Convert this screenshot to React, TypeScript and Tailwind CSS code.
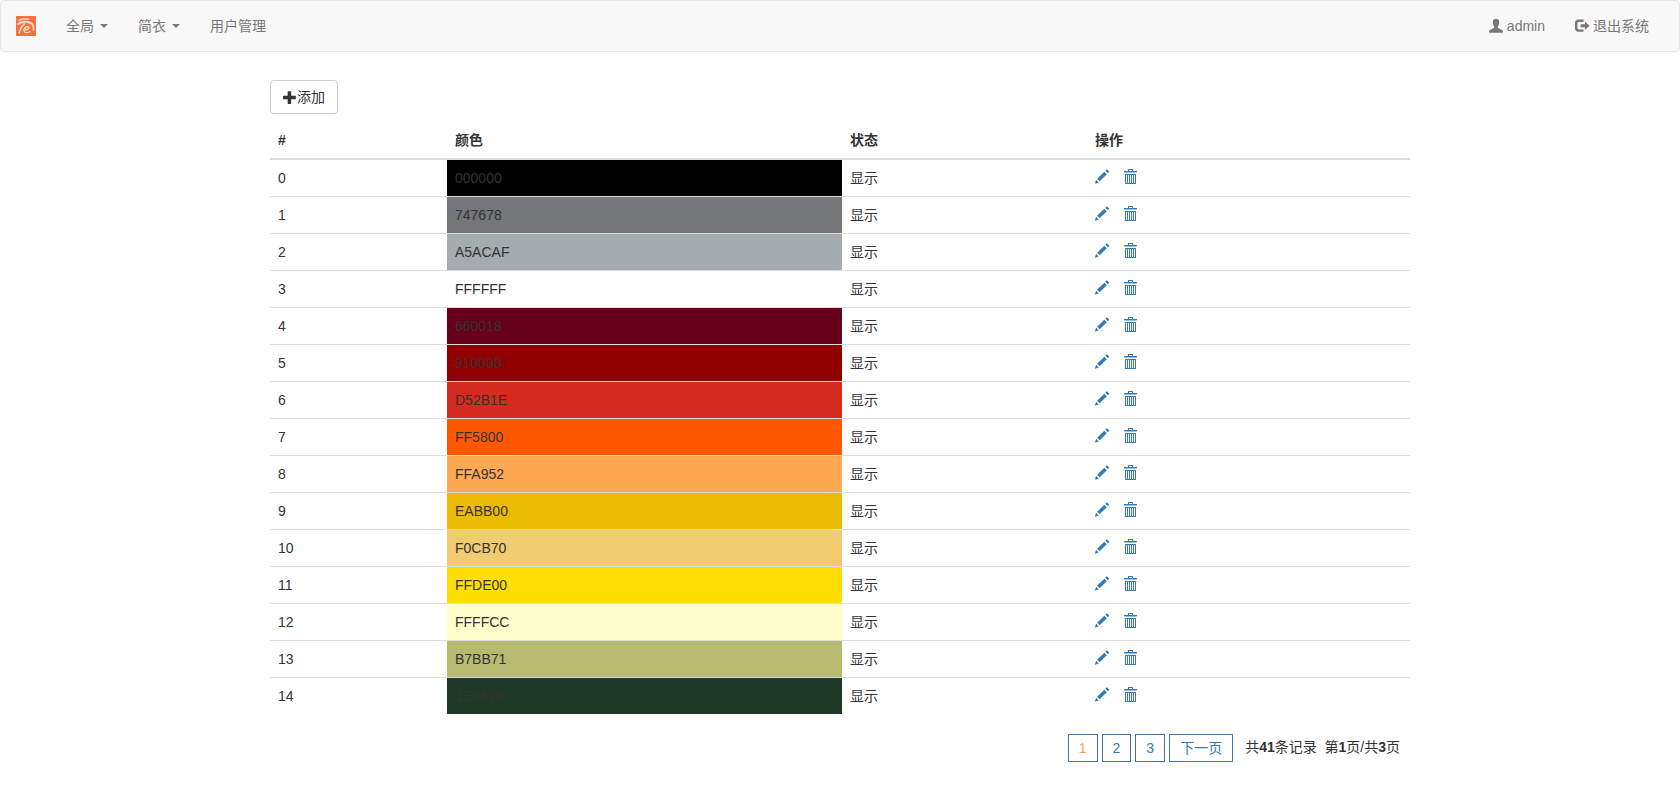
import React from "react";

const rows = [
  { code: "000000", bg: "bg-[#000000]" },
  { code: "747678", bg: "bg-[#747678]" },
  { code: "A5ACAF", bg: "bg-[#A5ACAF]" },
  { code: "FFFFFF", bg: "bg-[#FFFFFF]" },
  { code: "660018", bg: "bg-[#660018]" },
  { code: "910000", bg: "bg-[#910000]" },
  { code: "D52B1E", bg: "bg-[#D52B1E]" },
  { code: "FF5800", bg: "bg-[#FF5800]" },
  { code: "FFA952", bg: "bg-[#FFA952]" },
  { code: "EABB00", bg: "bg-[#EABB00]" },
  { code: "F0CB70", bg: "bg-[#F0CB70]" },
  { code: "FFDE00", bg: "bg-[#FFDE00]" },
  { code: "FFFFCC", bg: "bg-[#FFFFCC]" },
  { code: "B7BB71", bg: "bg-[#B7BB71]" },
  { code: "1E3828", bg: "bg-[#1E3828]" },
];

/* 14px glyph drawn on a 1200-unit, y-up grid. */
function Glyph({ d }: { d: string }) {
  return (
    <svg viewBox="0 0 1200 1200" className="inline-block size-3.5 shrink-0 overflow-visible" fill="currentColor" aria-hidden="true">
      <path transform="matrix(1 0 0 -1 0 1200)" fillRule="evenodd" d={d} />
    </svg>
  );
}

const PLUS =
  "M450 1100h200q21 0 35.500 -14.500t14.500 -35.500v-350h350q21 0 35.500 -14.500t14.500 -35.500v-200q0 -21 -14.500 -35.500t-35.500 -14.500h-350v-350q0 -21 -14.500 -35.500t-35.500 -14.500h-200q-21 0 -35.500 14.500t-14.500 35.500v350h-350q-21 0 -35.500 14.500t-14.500 35.500v200q0 21 14.500 35.500t35.500 14.500h350v350q0 21 14.500 35.500t35.500 14.500z";
const PENCIL =
  "M1011 1250q19 0 33 -13l153 -153q13 -14 13 -33t-13 -33l-99 -92l-214 214l95 96q13 14 32 14zM1013 840l-615 -614l-214 214l614 614zM317 136l-333 -112l110 335z";
const USER =
  "M600 1230q130 0 205 -85t75 -215q0 -100 -30 -190q-30 -85 -90 -140v-120q0 -50 60 -78l260 -120q120 -55 120 -160V30H0v92q0 105 120 160l260 120q60 28 60 78v120q-60 55 -90 140q-30 90 -30 190q0 130 75 215t205 85z";
const LOGOUT =
  "M300 1150h430v-200H320q-110 0 -110 -110v-420q0 -110 110 -110h410v-200H300Q0 110 0 400v460q0 290 300 290zM850 980l400 -350l-400 -350v220H480v260h370z";

function Trash() {
  return (
    <svg viewBox="0 0 14 14" className="size-3.5 shrink-0 overflow-visible" fill="currentColor" aria-hidden="true">
      <path d="M5 -1h5v1h-5zM5 0h1v1h-1zM9 0h1v1h-1zM1 1h13v1H1zM1.500 2h12v.5h-12z" />
      <path fillRule="evenodd" d="M2 4h11v10h-11zM3 5v8h1v-8zM5 5v8h1v-8zM7 5v8h1v-8zM9 5v8h1v-8zM11 5v8h1v-8z" />
    </svg>
  );
}

function Logo() {
  return (
    <svg viewBox="0 0 20 20" className="size-5" fill="none" aria-hidden="true">
      <rect width="20" height="20" rx="0.5" fill="#ff7038" />
      <g stroke="#ffe6da" strokeLinecap="round">
        <path d="M3 4.300Q7.500 2.200 12.500 3.300" strokeWidth="1.400" />
        <path d="M2 8Q7 5 12 6Q18 7.300 17.600 13.500" strokeWidth="1.800" />
        <path d="M8.500 8Q4.500 11 3.200 17" strokeWidth="1.500" />
        <path d="M9.500 13.800Q13.600 13 12.900 11.200Q11.600 9.700 9.300 11.500Q7 14 8.600 16Q11.500 17.500 14 15.500" strokeWidth="1.200" />
      </g>
    </svg>
  );
}

function Caret() {
  return <span className="ml-1.5 border-x-4 border-t-4 border-x-transparent border-t-[#777]" />;
}

export default function App() {
  return (
    <div className="min-h-[790px] bg-white font-['Liberation_Sans','Noto_Sans_CJK_SC',sans-serif] text-sm leading-5 text-[#333]">
      <nav className="flex h-[52px] items-center justify-between rounded-[4px] border border-[#e7e7e7] bg-[#f8f8f8] px-[15px] text-[#777]">
        <div className="flex items-center">
          <a href="#" className="mr-[15px]"><Logo /></a>
          <a href="#" className="flex items-center px-[15px]">全局<Caret /></a>
          <a href="#" className="flex items-center px-[15px]">简衣<Caret /></a>
          <a href="#" className="px-[15px]">用户管理</a>
        </div>
        <div className="flex items-center">
          <a href="#" className="flex items-center gap-1 px-[15px]"><Glyph d={USER} />admin</a>
          <a href="#" className="flex items-center gap-1 px-[15px]"><Glyph d={LOGOUT} />退出系统</a>
        </div>
      </nav>

      <main className="mx-auto w-[1140px] pt-7">
        <button className="flex h-[34px] items-center rounded-[4px] border border-[#ccc] bg-white px-3">
          <Glyph d={PLUS} />添加
        </button>
        <table className="mt-2 w-full table-fixed border-separate border-spacing-0 text-left">
          <colgroup>
            <col className="w-[177px]" />
            <col className="w-[395px]" />
            <col className="w-[245px]" />
            <col className="w-[323px]" />
          </colgroup>
          <thead>
            <tr>
              {["#", "颜色", "状态", "操作"].map((h) => (
                <th key={h} className="h-[38px] border-b-2 border-[#ddd] px-2 py-0 font-bold">{h}</th>
              ))}
            </tr>
          </thead>
          <tbody className="[&>tr:last-child>td]:h-9 [&>tr:last-child>td]:border-b-0">
            {rows.map((row, i) => (
              <tr key={row.code} className="[&>td]:h-[37px] [&>td]:border-b [&>td]:border-[#ddd] [&>td]:px-2 [&>td]:py-0">
                <td>{i}</td>
                <td className={row.bg}>{row.code}</td>
                <td>显示</td>
                <td>
                  <div className="flex items-center gap-3.5 pb-0.5 text-[#337ab7]">
                    <a href="#" className="flex"><Glyph d={PENCIL} /></a>
                    <a href="#" className="flex"><Trash /></a>
                  </div>
                </td>
              </tr>
            ))}
          </tbody>
        </table>

        <div className="mt-5 flex items-center justify-end pr-2.5">
          <div className="flex gap-1 text-[#337ab7] [&>a]:flex [&>a]:h-7 [&>a]:items-center [&>a]:border [&>a]:border-[#44719b] [&>a]:px-2.5">
            <a href="#" className="text-[#ffa04d]">1</a>
            <a href="#">2</a>
            <a href="#">3</a>
            <a href="#">下一页</a>
          </div>
          <span className="ml-3 whitespace-pre pb-0.5">共<b>41</b>条记录  第<b>1</b>页/共<b>3</b>页</span>
        </div>
      </main>
    </div>
  );
}
